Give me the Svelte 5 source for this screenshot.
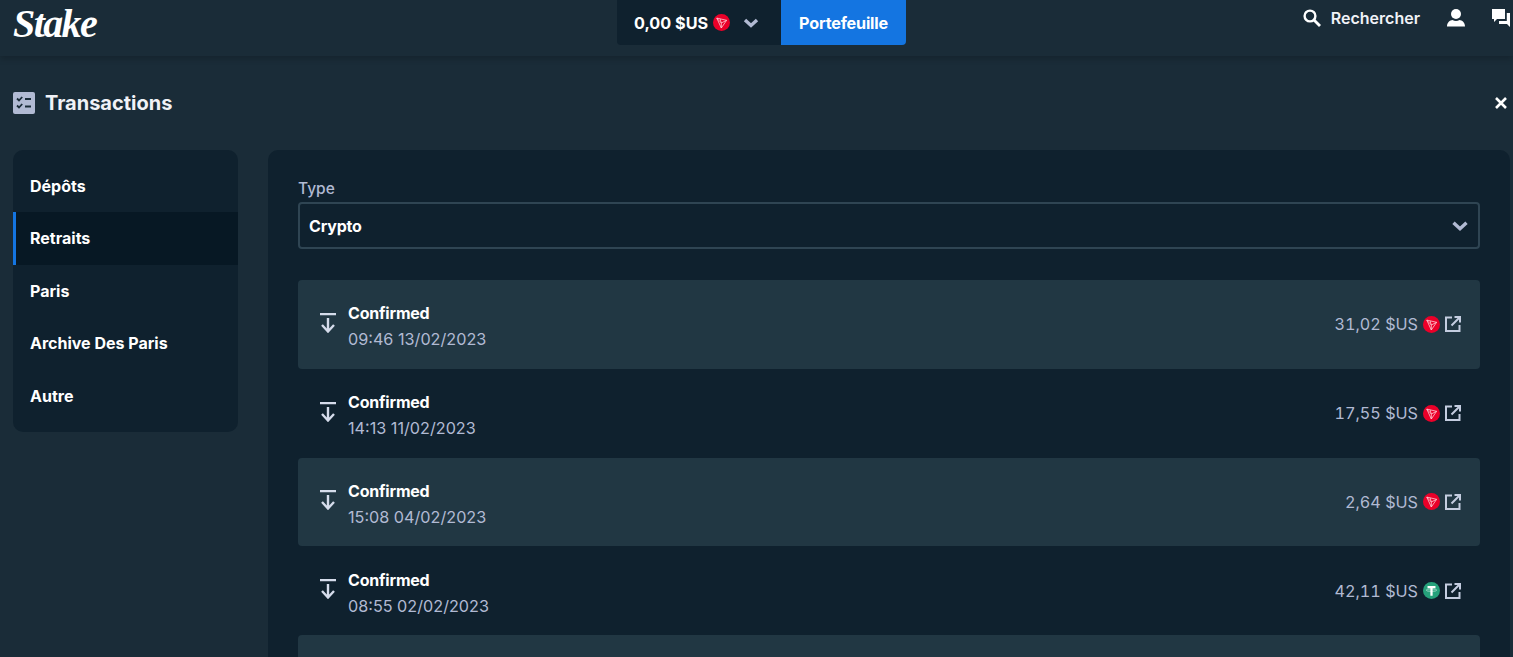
<script>
  const tabs = ['Dépôts', 'Retraits', 'Paris', 'Archive Des Paris', 'Autre'];
  const rows = [
    { date: '09:46 13/02/2023', amount: '31,02 $US', coin: 'trx' },
    { date: '14:13 11/02/2023', amount: '17,55 $US', coin: 'trx' },
    { date: '15:08 04/02/2023', amount: '2,64 $US', coin: 'trx' },
    { date: '08:55 02/02/2023', amount: '42,11 $US', coin: 'usdt' }
  ];
</script>

{#snippet tron()}
  <svg class="coin" viewBox="0 0 18 18">
    <circle cx="9" cy="9" r="9" fill="#eb0029" />
    <path d="M4 4.300l10.400 2.400-5.600 8.100zM4 4.300l4.800 5.200 5.600-2.800M8.800 9.500v5.300M7.500 5.200l1.300 4.300" fill="none" stroke="#ffd9df" stroke-width="0.800" stroke-linejoin="round" />
  </svg>
{/snippet}

{#snippet tether()}
  <svg class="coin" viewBox="0 0 18 18">
    <circle cx="9" cy="9" r="9" fill="#26a17b" />
    <path d="M4.800 4.200h8.400v2.400h-3v8h-2.400v-8h-3z" fill="#fff" />
    <ellipse cx="9" cy="8.600" rx="5.500" ry="1.300" fill="none" stroke="#fff" stroke-width="0.700" opacity="0.8" />
  </svg>
{/snippet}

<div class="page">
  <header class="topbar">
    <div class="logo">Stake</div>
    <div class="wallet">
      <div class="balance">
        <span>0,00 $US</span>
        {@render tron()}
        <svg class="caret" viewBox="0 0 16 16"><path d="M2 5l6 5.500 6-5.500" fill="none" stroke="#b1bad3" stroke-width="3.400" /></svg>
      </div>
      <div class="wallet-btn">Portefeuille</div>
    </div>
    <div class="actions">
      <div class="search">
        <svg viewBox="0 0 18 18"><circle cx="7" cy="7" r="5.400" fill="none" stroke="#fff" stroke-width="2.400" /><path d="M11 11l6 6" stroke="#fff" stroke-width="2.800" /></svg>
        <span>Rechercher</span>
      </div>
      <svg class="user" viewBox="0 0 18 18"><circle cx="9" cy="5" r="5" fill="#fff" /><path d="M0 17.500c0-4 3-6.300 5.500-6.500 2 1.200 5 1.200 7 0 2.500.2 5.500 2.500 5.500 6.500z" fill="#fff" /></svg>
      <svg class="chat" viewBox="0 0 18 18"><path d="M0 0h13v10H5l-3 3v-3H0z" fill="#fff" /><path d="M14.800 4H18v14l-3-3H7v-3h7.800z" fill="#fff" /></svg>
    </div>
  </header>

  <div class="title-row">
    <div class="title">
      <svg class="title-icon" viewBox="0 0 22 22">
        <rect width="22" height="22" rx="2" fill="#b1bad3" />
        <path d="M4 6.500l2 2 3.200-3.500M4 13.500l2 2 3.200-3.500" fill="none" stroke="#1a2c38" stroke-width="1.800" />
        <path d="M12 7h6M12 14.500h6" stroke="#1a2c38" stroke-width="2" />
      </svg>
      <h1>Transactions</h1>
    </div>
    <svg class="close" viewBox="0 0 12 12"><path d="M1 1l10 10M11 1L1 11" stroke="#fff" stroke-width="2.600" /></svg>
  </div>

  <div class="content">
    <nav class="sidebar">
      {#each tabs as tab, i}
        <div class="tab" class:active={i === 1}>{tab}</div>
      {/each}
    </nav>

    <main class="panel">
      <div class="field-label">Type</div>
      <div class="select">
        <span>Crypto</span>
        <svg viewBox="0 0 16 16"><path d="M1.500 4.800l6.500 6 6.500-6" fill="none" stroke="#b1bad3" stroke-width="3.400" /></svg>
      </div>

      <div class="list">
        {#each rows as row}
          <div class="row">
            <svg class="arrow" viewBox="0 0 16 20">
              <path d="M0 1h16M8 5v13.500M2 12l6 6.500 6-6.500" fill="none" stroke="#d5dceb" stroke-width="2.400" />
            </svg>
            <div class="info">
              <div class="status">Confirmed</div>
              <div class="date">{row.date}</div>
            </div>
            <div class="amount">
              <span>{row.amount}</span>
              {#if row.coin === 'trx'}
                {@render tron()}
              {:else}
                {@render tether()}
              {/if}
              <svg class="ext" viewBox="0 0 16 16">
                <path d="M7 1.500H1v13.500h13.500V9M9.500 1h5.500v5.500M15 1L6.500 9.500" fill="none" stroke="#c4cde0" stroke-width="2" />
              </svg>
            </div>
          </div>
        {/each}
        <div class="row"></div>
      </div>
    </main>
  </div>
</div>

<style>
  :global(body) {
    margin: 0;
    overflow: hidden;
    background: #1a2c38;
  }

  .page {
    height: 657px;
    overflow: hidden;
    font-family: Inter, "Liberation Sans", sans-serif;
    color: #fff;
  }

  .topbar {
    position: relative;
    height: 56px;
    box-sizing: border-box;
    padding: 0 3px 0 13px;
    display: grid;
    grid-template-columns: 1fr auto 1fr;
    background: #1a2c38;
    box-shadow: 0 3px 6px rgba(0, 0, 0, 0.18);
  }

  .logo {
    font-family: "Liberation Serif", serif;
    font-style: italic;
    font-weight: 700;
    font-size: 40px;
    letter-spacing: -1.600px;
  }

  .wallet {
    display: flex;
    height: 45px;
    font-size: 16.2px;
    font-weight: 700;
  }

  .balance {
    width: 164px;
    box-sizing: border-box;
    padding-left: 17px;
    display: flex;
    align-items: center;
    background: #0f212e;
    border-radius: 0 0 0 4px;
  }

  .balance .coin {
    margin-left: 5px;
  }

  .caret {
    width: 16px;
    height: 16px;
    margin-left: 13px;
  }

  .wallet-btn {
    width: 125px;
    display: flex;
    align-items: center;
    justify-content: center;
    background: #1475e1;
    border-radius: 0 0 4px 0;
    letter-spacing: -0.200px;
  }

  .actions {
    display: flex;
    justify-content: flex-end;
    align-items: flex-start;
    padding-top: 9px;
  }

  .search {
    display: flex;
    align-items: center;
    gap: 10px;
    font-size: 16px;
    font-weight: 600;
    color: #f0f2f7;
    height: 18px;
  }

  .search svg {
    width: 18px;
    height: 18px;
  }

  .user {
    width: 18px;
    height: 18px;
    margin-left: 27px;
  }

  .chat {
    width: 18px;
    height: 18px;
    margin-left: 27px;
  }

  .coin {
    width: 17px;
    height: 17px;
    flex: none;
  }

  .title-row {
    height: 94px;
    box-sizing: border-box;
    padding: 0 6px 0 13px;
    display: flex;
    align-items: center;
    justify-content: space-between;
  }

  .title {
    display: flex;
    align-items: center;
    gap: 10px;
  }

  .title-icon {
    width: 22px;
    height: 22px;
  }

  h1 {
    margin: 0;
    font-size: 20px;
    font-weight: 700;
    color: #f0f2f7;
  }

  .close {
    width: 12px;
    height: 12px;
  }

  .content {
    display: flex;
    gap: 30px;
    padding: 0 3px 0 13px;
    align-items: flex-start;
  }

  .sidebar {
    width: 225px;
    flex: none;
    box-sizing: border-box;
    padding: 10px 0;
    background: #0f212e;
    border-radius: 10px;
    overflow: hidden;
  }

  .tab {
    height: 52.4px;
    box-sizing: border-box;
    display: flex;
    align-items: center;
    font-size: 16px;
    font-weight: 700;
    border-left: 3px solid transparent;
    padding-left: 14px;
  }

  .tab.active {
    background: #071824;
    border-left-color: #1475e1;
    padding-bottom: 2px;
  }

  .panel {
    flex: 1;
    height: 520px;
    box-sizing: border-box;
    padding: 29px 30px;
    background: #0f212e;
    border-radius: 10px 10px 0 0;
  }

  .field-label {
    font-size: 15.500px;
    font-weight: 500;
    line-height: 18px;
    padding-top: 1px;
    margin-bottom: 4px;
    color: #b1bad3;
  }

  .select {
    height: 47px;
    box-sizing: border-box;
    border: 2px solid #2f4553;
    border-radius: 4px;
    padding: 0 10px 0 9px;
    display: flex;
    align-items: center;
    justify-content: space-between;
    font-size: 16px;
    font-weight: 700;
    letter-spacing: -0.200px;
  }

  .select svg {
    width: 16px;
    height: 16px;
  }

  .list {
    margin-top: 31px;
  }

  .row {
    height: 88.8px;
    box-sizing: border-box;
    padding: 0 19px 0 22px;
    display: flex;
    align-items: center;
    border-radius: 4px;
  }

  .row:nth-child(odd) {
    background: #213743;
  }

  .arrow {
    width: 16px;
    height: 20px;
    flex: none;
    margin-right: 12px;
    margin-bottom: 3px;
  }

  .info {
    flex: 1;
    padding-top: 4px;
  }

  .status {
    font-size: 16px;
    font-weight: 700;
    letter-spacing: -0.200px;
    line-height: 20px;
    margin-bottom: 6px;
  }

  .date {
    font-size: 16.2px;
    line-height: 20px;
    color: #b1bad3;
  }

  .amount {
    display: flex;
    align-items: center;
    gap: 5px;
    font-size: 16.2px;
    font-variant-numeric: tabular-nums;
    color: #b1bad3;
  }

  .ext {
    width: 16px;
    height: 16px;
  }
</style>
